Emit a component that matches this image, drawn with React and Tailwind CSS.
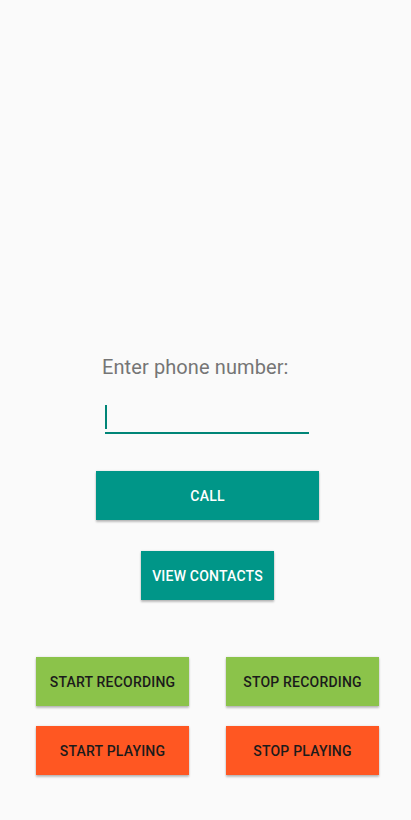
import React from "react";

const Btn = ({ label, className }) => (
  <button
    className={
      "flex h-[49px] items-center justify-center pt-[2px] text-[14px] font-medium uppercase tracking-[0.2px] shadow-[0_2px_2px_rgba(0,0,0,0.24),0_0_2px_rgba(0,0,0,0.12)] " +
      className
    }
  >
    {label}
  </button>
);

export default function App() {
  return (
    <div className="min-h-[820px] bg-[#fafafa] font-['Roboto',sans-serif]">
      <div className="pt-[355px]">
        <p className="ml-[102px] text-[20px] leading-[24px] tracking-[0.1px] text-[#757575]">Enter phone number:</p>

        <div className="ml-[105px] mt-[24px] h-[31px] w-[204px] border-b-2 border-[#008577] pt-[2px]">
          <div className="h-[24px] w-[2px] bg-[#008577]" />
        </div>

        <Btn label="Call" className="ml-[96px] mt-[37px] w-[223px] bg-[#009688] text-white" />
        <Btn label="View Contacts" className="ml-[141px] mt-[31px] w-[133px] bg-[#009688] text-white" />

        <div className="mt-[57px] grid grid-cols-[153px_153px] gap-x-[37px] gap-y-[20px] pl-[36px]">
          <Btn label="Start Recording" className="w-[153px] bg-[#8bc34a] text-[#1b1b1b]" />
          <Btn label="Stop Recording" className="w-[153px] bg-[#8bc34a] text-[#1b1b1b]" />
          <Btn label="Start Playing" className="w-[153px] bg-[#ff5722] text-[#1b1b1b]" />
          <Btn label="Stop Playing" className="w-[153px] bg-[#ff5722] text-[#1b1b1b]" />
        </div>
      </div>
    </div>
  );
}
